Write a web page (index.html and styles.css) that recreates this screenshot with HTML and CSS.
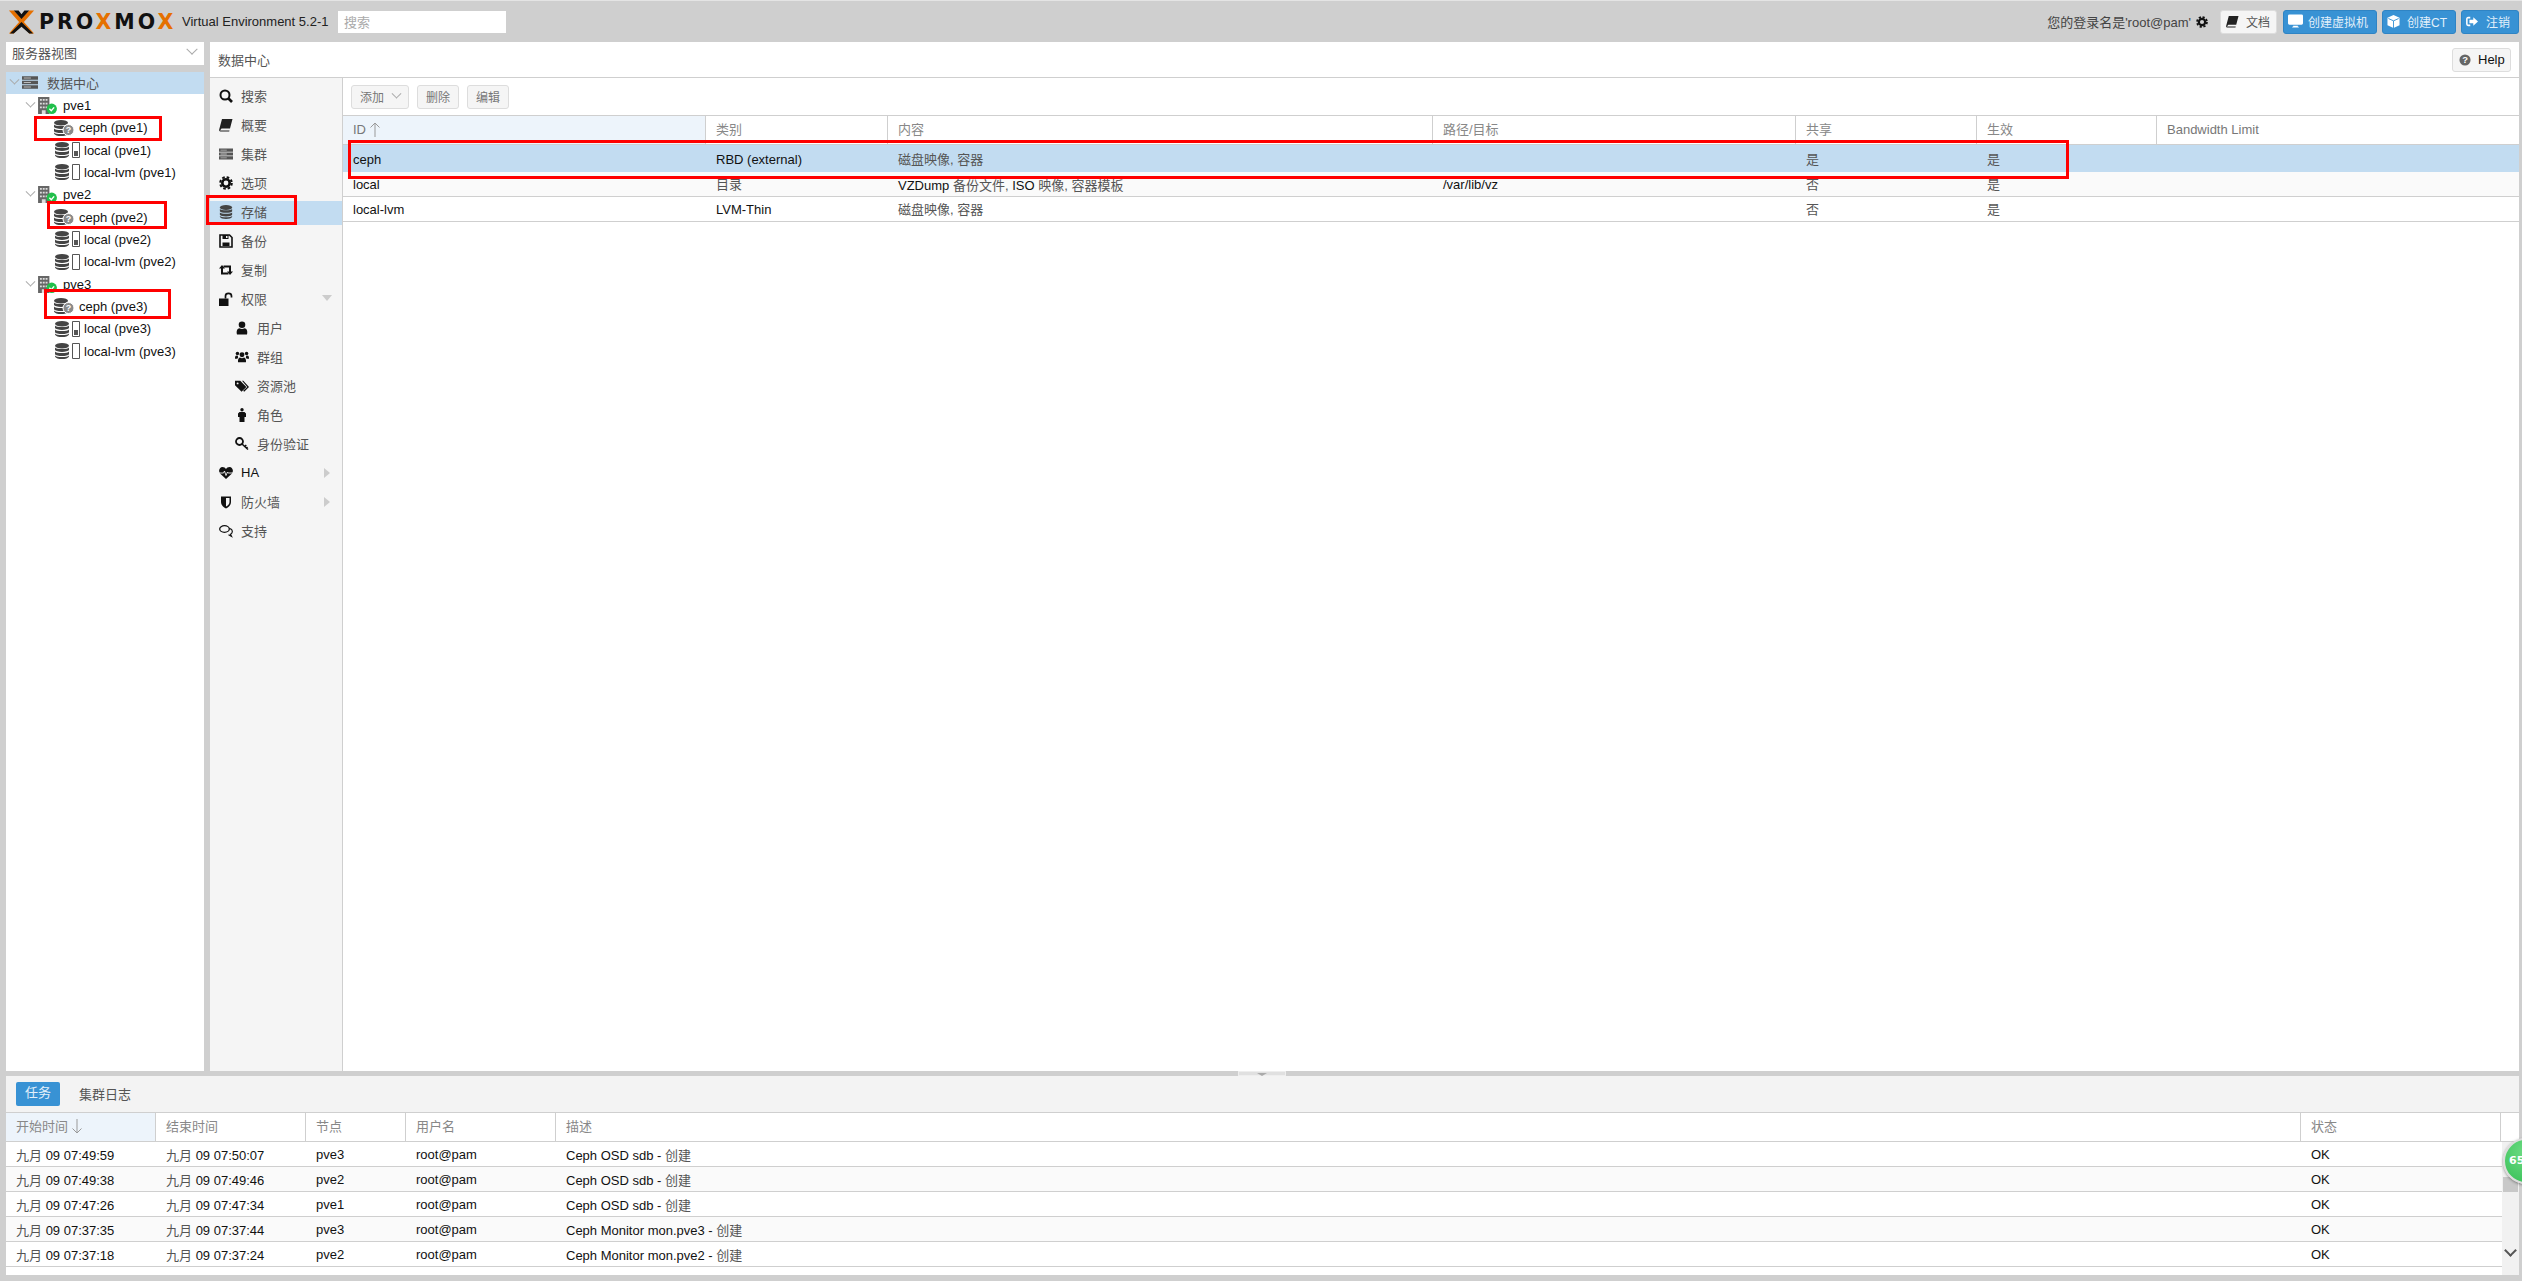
FILE: index.html
```html
<!DOCTYPE html>
<html lang="zh">
<head>
    <meta charset="UTF-8">
    <title>Proxmox Virtual Environment</title>
    <link rel="stylesheet" href="styles.css">
</head>
<body>
    <!-- icon sprite -->
    <svg class="sprite" xmlns="http://www.w3.org/2000/svg">
        <symbol id="i-servers" viewBox="0 0 18 14"><path d="M0 0h18v4H0zM0 5h18v4H0zM0 10h18v4H0z" fill="#555"/><path d="M2 1.500h8v1H2zM2 6.500h8v1H2zM2 11.500h8v1H2z" fill="#bbb"/></symbol>
        <symbol id="i-node" viewBox="0 0 20 18"><path d="M0 0h12v18H0z" fill="#666"/><path d="M2 2h2v2H2zM5 2h2v2H5zM8 2h2v2H8zM2 6h2v2H2zM5 6h2v2H5zM8 6h2v2H8zM2 10h2v2H2zM5 10h2v2H5zM8 10h2v2H8zM4 14h4v4H4z" fill="#ddd"/><circle cx="14.500" cy="12.500" r="5.500" fill="#21bf4b"/><path d="M12 12.500l2 2 3-3.500" fill="none" stroke="#fff" stroke-width="1.500"/></symbol>
        <symbol id="i-db" viewBox="0 0 14 16"><ellipse cx="7" cy="2.800" rx="7" ry="2.800" fill="#444"/><path d="M0 4.500c1 2 13 2 14 0v2.600c-1 2.400-13 2.400-14 0zM0 8.600c1 2 13 2 14 0v2.600c-1 2.400-13 2.400-14 0zM0 12.600c1 2 13 2 14 0v.8c-1 3.400-13 3.400-14 0z" fill="#444"/></symbol>
        <symbol id="i-ceph" viewBox="0 0 20 16"><use href="#i-db" width="14" height="16"/><circle cx="14.500" cy="10" r="5.500" fill="#8a8a8a" stroke="#fff"/><text x="14.500" y="13.200" class="qmark">?</text></symbol>
        <symbol id="i-disk" viewBox="0 0 8 16"><path d="M.5.5h7v15h-7z" fill="#fff" stroke="#555"/><path d="M2 9h4v5H2z" fill="#555"/></symbol>
        <symbol id="i-empty" viewBox="0 0 8 16"><path d="M.5.5h7v15h-7z" fill="#fff" stroke="#555"/></symbol>
        <symbol id="i-search" viewBox="0 0 14 14"><circle cx="6" cy="6" r="4.500" fill="none" stroke="#111" stroke-width="2"/><path d="M9 9l4 4" stroke="#111" stroke-width="2.600"/></symbol>
        <symbol id="i-book" viewBox="0 0 14 14"><path d="M3 1h10.500l-2.500 9.500H2.500L1 12.500h9.500l-.3 1H1.500C.4 13.500 0 12.500.2 11.500z" fill="#222"/></symbol>
        <symbol id="i-gear" viewBox="0 0 14 14"><circle cx="7" cy="7" r="3.700" fill="none" stroke="#111" stroke-width="2.600"/><circle cx="7" cy="7" r="5.800" fill="none" stroke="#111" stroke-width="2" stroke-dasharray="2.600 1.950"/></symbol>
        <symbol id="i-save" viewBox="0 0 14 14"><path d="M1 1h9.500L13 3.500V13H1z" fill="none" stroke="#111" stroke-width="1.600"/><path d="M3.500 1h6v4h-6zM3.500 8.500h7v3.500h-7z" fill="#111"/><path d="M7 2h1.500v2H7z" fill="#f5f5f5"/></symbol>
        <symbol id="i-retweet" viewBox="0 0 14 12"><path d="M3 3.500V9.500H9.500M11 8.500V2.500H4.500" fill="none" stroke="#111" stroke-width="2"/><path d="M0 4.500L3 1l3 3.500zM8 7.500L11 11l3-3.500z" fill="#111"/></symbol>
        <symbol id="i-unlock" viewBox="0 0 14 14"><path d="M0 6.500h9.500V14H0z" fill="#111"/><path d="M6.500 6.500V4c0-3.500 6-3.500 6 0v1.500" fill="none" stroke="#111" stroke-width="1.700"/></symbol>
        <symbol id="i-user" viewBox="0 0 12 14"><circle cx="6" cy="3.800" r="3.300" fill="#111"/><path d="M1 13.500c-1-4 .5-6 2.500-6.300 1.500 1 3.500 1 5 0 2 .3 3.500 2.300 2.500 6.300z" fill="#111"/></symbol>
        <symbol id="i-users" viewBox="0 0 16 14"><circle cx="8" cy="4.500" r="2.800" fill="#111"/><circle cx="2.800" cy="3" r="2" fill="#111"/><circle cx="13.200" cy="3" r="2" fill="#111"/><path d="M3.500 13c-.5-3.500 1-5 2.200-5.300 1.500.8 3 .8 4.600 0 1.200.3 2.700 1.800 2.200 5.300zM0 9c-.2-2.500.8-3.500 1.600-3.700.6.400 1.300.5 1.900.3-.3 1-.2 1.700.3 2.400C3 8.300 2.400 8.700 2 9zM16 9c.2-2.500-.8-3.500-1.600-3.700-.6.400-1.300.5-1.900.3.300 1 .2 1.700-.3 2.400.8.300 1.400.7 1.800 1z" fill="#111"/></symbol>
        <symbol id="i-tags" viewBox="0 0 16 14"><path d="M0 1h6l7 7-5.500 5.500L0 6z" fill="#111"/><path d="M8 1h1.500l6.500 7-5.500 5.500-1.200-1L14 8z" fill="#111"/><circle cx="3" cy="4" r="1.100" fill="#f5f5f5"/></symbol>
        <symbol id="i-male" viewBox="0 0 8 14"><circle cx="4" cy="1.700" r="1.700" fill="#111"/><path d="M1.500 4h5L8 5.500V9H6.500v5H1.500V9H0V5.500z" fill="#111"/></symbol>
        <symbol id="i-key" viewBox="0 0 14 14"><circle cx="4.500" cy="4.500" r="3.500" fill="none" stroke="#111" stroke-width="1.800"/><path d="M7 7l6 5.500M9.500 9.500l1.800-1.500M11.500 11l1-1" fill="none" stroke="#111" stroke-width="1.600"/></symbol>
        <symbol id="i-heart" viewBox="0 0 14 12"><path d="M7 12L1 6.500C-1 4 .5 0 3.500 0 5 0 6.300.8 7 2c.7-1.200 2-2 3.500-2 3 0 4.500 4 2.500 6.500z" fill="#111"/><path d="M0 6h4.500l1-2 1.500 4.500L8.500 5l.7 1H14" fill="none" stroke="#f5f5f5" stroke-width=".9"/></symbol>
        <symbol id="i-shield" viewBox="0 0 12 14"><path d="M1 1.500h10V7c0 3-2.500 5.500-5 6.500C3.500 12.500 1 10 1 7z" fill="#111"/><path d="M6 3v8.500C7.800 10.500 9.500 9 9.500 7V3z" fill="#f5f5f5"/></symbol>
        <symbol id="i-comments" viewBox="0 0 14 12"><path d="M8 3.500c3-.5 5.500 1 5.300 3.300-.1 1.200-.8 2-1.800 2.500l1 2-3-1.500" fill="none" stroke="#111" stroke-width="1.200"/><ellipse cx="5.500" cy="4" rx="4.800" ry="3.300" fill="#f5f5f5" stroke="#111" stroke-width="1.300"/></symbol>
        <symbol id="i-desktop" viewBox="0 0 16 14"><path d="M1.500 0h13A1.500 1.500 0 0 1 16 1.500v8a1.500 1.500 0 0 1-1.500 1.500h-13A1.500 1.500 0 0 1 0 9.500v-8A1.500 1.500 0 0 1 1.500 0zM5.500 12h5v1h1v1h-7v-1h1z" fill="#fff"/></symbol>
        <symbol id="i-cube" viewBox="0 0 14 14"><path d="M7 0l6.500 3v8L7 14 .5 11V3z" fill="#fff"/><path d="M1.500 3.800L7 6.300l5.500-2.500M7 6.300V14" fill="none" stroke="#3892d4" stroke-width="1"/></symbol>
        <symbol id="i-signout" viewBox="0 0 14 12"><path d="M5 1.500H2.500C1.500 1.500 1 2 1 3v6c0 1 .5 1.500 1.500 1.500H5" fill="none" stroke="#fff" stroke-width="1.800"/><path d="M4 4h4.500V1l5.500 5-5.500 5V8H4z" fill="#fff"/></symbol>
        <symbol id="i-help" viewBox="0 0 14 14"><circle cx="7" cy="7" r="6.500" fill="#666"/><text x="7" y="11" class="qmark-big">?</text></symbol>
        <symbol id="i-up" viewBox="0 0 10 15"><path d="M5 15V1M.5 5.500L5 1l4.500 4.500" fill="none" stroke="#999"/></symbol>
        <symbol id="i-down" viewBox="0 0 10 15"><path d="M5 0v14M.5 9.500L5 14l4.500-4.500" fill="none" stroke="#999"/></symbol>
    </svg>

    <header class="topbar">
        <svg class="logo-mark" viewBox="0 0 30 26"><path d="M7 1l8 8 8-8h5L17.500 13 28 25h-5l-8-9-8 9H2l10.500-12L2 1z" fill="#e57000"/><path d="M7 1h5l3 4 3-4h5l-8 9zM7 25H3l12-12 12 12h-4l-8-7z" fill="#111"/></svg>
        <div class="logo-text">PRO<span>X</span>MO<span>X</span></div>
        <div class="version">Virtual Environment 5.2-1</div>
        <div class="search-box">搜索</div>
        <div class="top-right">
            <span class="login">您的登录名是'root@pam'</span>
            <svg class="login-gear"><use href="#i-gear"/></svg>
            <div class="top-btn light"><svg><use href="#i-book"/></svg>文档</div>
            <div class="top-btn blue vm"><svg><use href="#i-desktop"/></svg>创建虚拟机</div>
            <div class="top-btn blue ct"><svg><use href="#i-cube"/></svg>创建CT</div>
            <div class="top-btn blue out"><svg><use href="#i-signout"/></svg>注销</div>
        </div>
    </header>

    <div class="main">
        <div class="left">
            <div class="view-select">服务器视图<span class="chev big"></span></div>
            <div class="tree">
                <div class="tree-row dc selected"><span class="chev"></span><svg class="ic-servers"><use href="#i-servers"/></svg><span class="zh">数据中心</span></div>

                <div class="tree-row node"><span class="chev"></span><svg class="ic-node"><use href="#i-node"/></svg>pve1</div>
                <div class="tree-row ceph"><svg class="ic-ceph"><use href="#i-ceph"/></svg>ceph (pve1)</div>
                <div class="tree-row store"><svg class="ic-db"><use href="#i-db"/></svg><svg class="ic-bar"><use href="#i-disk"/></svg>local (pve1)</div>
                <div class="tree-row store"><svg class="ic-db"><use href="#i-db"/></svg><svg class="ic-bar"><use href="#i-empty"/></svg>local-lvm (pve1)</div>

                <div class="tree-row node"><span class="chev"></span><svg class="ic-node"><use href="#i-node"/></svg>pve2</div>
                <div class="tree-row ceph"><svg class="ic-ceph"><use href="#i-ceph"/></svg>ceph (pve2)</div>
                <div class="tree-row store"><svg class="ic-db"><use href="#i-db"/></svg><svg class="ic-bar"><use href="#i-disk"/></svg>local (pve2)</div>
                <div class="tree-row store"><svg class="ic-db"><use href="#i-db"/></svg><svg class="ic-bar"><use href="#i-empty"/></svg>local-lvm (pve2)</div>

                <div class="tree-row node"><span class="chev"></span><svg class="ic-node"><use href="#i-node"/></svg>pve3</div>
                <div class="tree-row ceph"><svg class="ic-ceph"><use href="#i-ceph"/></svg>ceph (pve3)</div>
                <div class="tree-row store"><svg class="ic-db"><use href="#i-db"/></svg><svg class="ic-bar"><use href="#i-disk"/></svg>local (pve3)</div>
                <div class="tree-row store"><svg class="ic-db"><use href="#i-db"/></svg><svg class="ic-bar"><use href="#i-empty"/></svg>local-lvm (pve3)</div>
            </div>
        </div>

        <div class="center">
            <div class="title-bar">
                <span class="zh">数据中心</span>
                <div class="help-btn"><svg><use href="#i-help"/></svg>Help</div>
            </div>
            <div class="body-row">
                <nav class="nav">
                    <div class="nav-item"><svg><use href="#i-search"/></svg>搜索</div>
                    <div class="nav-item"><svg><use href="#i-book"/></svg>概要</div>
                    <div class="nav-item"><svg><use href="#i-servers"/></svg>集群</div>
                    <div class="nav-item"><svg><use href="#i-gear"/></svg>选项</div>
                    <div class="nav-item active"><svg><use href="#i-db"/></svg>存储</div>
                    <div class="nav-item"><svg><use href="#i-save"/></svg>备份</div>
                    <div class="nav-item"><svg><use href="#i-retweet"/></svg>复制</div>
                    <div class="nav-item"><svg><use href="#i-unlock"/></svg>权限<span class="tri down"></span></div>
                    <div class="nav-item sub"><svg><use href="#i-user"/></svg>用户</div>
                    <div class="nav-item sub"><svg><use href="#i-users"/></svg>群组</div>
                    <div class="nav-item sub"><svg><use href="#i-tags"/></svg>资源池</div>
                    <div class="nav-item sub"><svg><use href="#i-male"/></svg>角色</div>
                    <div class="nav-item sub"><svg><use href="#i-key"/></svg>身份验证</div>
                    <div class="nav-item black"><svg><use href="#i-heart"/></svg>HA<span class="tri right"></span></div>
                    <div class="nav-item"><svg><use href="#i-shield"/></svg>防火墙<span class="tri right"></span></div>
                    <div class="nav-item"><svg><use href="#i-comments"/></svg>支持</div>
                </nav>
                <div class="content">
                    <div class="toolbar">
                        <div class="tool-btn add">添加<span class="chev"></span></div>
                        <div class="tool-btn">删除</div>
                        <div class="tool-btn">编辑</div>
                    </div>
                    <table class="grid storage-grid">
                        <colgroup><col class="c1"><col class="c2"><col class="c3"><col class="c4"><col class="c5"><col class="c6"><col></colgroup>
                        <thead>
                            <tr><th class="sorted en">ID <svg class="sort-arrow"><use href="#i-up"/></svg></th><th>类别</th><th>内容</th><th>路径/目标</th><th>共享</th><th>生效</th><th class="en">Bandwidth Limit</th></tr>
                        </thead>
                        <tbody>
                            <tr class="row-selected"><td>ceph</td><td>RBD (external)</td><td class="zh">磁盘映像, 容器</td><td></td><td class="zh">是</td><td class="zh">是</td><td></td></tr>
                            <tr class="alt"><td>local</td><td class="zh">目录</td><td>VZDump <span class="zh">备份文件,</span> ISO <span class="zh">映像, 容器模板</span></td><td>/var/lib/vz</td><td class="zh">否</td><td class="zh">是</td><td></td></tr>
                            <tr><td>local-lvm</td><td>LVM-Thin</td><td class="zh">磁盘映像, 容器</td><td></td><td class="zh">否</td><td class="zh">是</td><td></td></tr>
                        </tbody>
                    </table>
                </div>
            </div>
        </div>
    </div>

    <div class="splitter"><div class="split-handle"><span></span></div></div>

    <div class="bottom">
        <div class="tabs">
            <div class="tab active">任务</div>
            <div class="tab">集群日志</div>
        </div>
        <table class="grid task-grid">
            <colgroup><col class="t1"><col class="t2"><col class="t3"><col class="t4"><col><col class="t6"><col class="t7"></colgroup>
            <thead>
                <tr><th class="sorted">开始时间 <svg class="sort-arrow"><use href="#i-down"/></svg></th><th>结束时间</th><th>节点</th><th>用户名</th><th>描述</th><th>状态</th><th></th></tr>
            </thead>
            <tbody>
                <tr><td><span class="zh">九月</span> 09 07:49:59</td><td><span class="zh">九月</span> 09 07:50:07</td><td>pve3</td><td>root@pam</td><td>Ceph OSD sdb - <span class="zh">创建</span></td><td>OK</td><td></td></tr>
                <tr class="alt"><td><span class="zh">九月</span> 09 07:49:38</td><td><span class="zh">九月</span> 09 07:49:46</td><td>pve2</td><td>root@pam</td><td>Ceph OSD sdb - <span class="zh">创建</span></td><td>OK</td><td></td></tr>
                <tr><td><span class="zh">九月</span> 09 07:47:26</td><td><span class="zh">九月</span> 09 07:47:34</td><td>pve1</td><td>root@pam</td><td>Ceph OSD sdb - <span class="zh">创建</span></td><td>OK</td><td></td></tr>
                <tr class="alt"><td><span class="zh">九月</span> 09 07:37:35</td><td><span class="zh">九月</span> 09 07:37:44</td><td>pve3</td><td>root@pam</td><td>Ceph Monitor mon.pve3 - <span class="zh">创建</span></td><td>OK</td><td></td></tr>
                <tr><td><span class="zh">九月</span> 09 07:37:18</td><td><span class="zh">九月</span> 09 07:37:24</td><td>pve2</td><td>root@pam</td><td>Ceph Monitor mon.pve2 - <span class="zh">创建</span></td><td>OK</td><td></td></tr>
            </tbody>
        </table>
        <div class="scrollbar"><div class="thumb"></div><span class="scroll-down"></span></div>
    </div>

    <!-- red annotation boxes drawn over the screenshot -->
    <div class="mark m-tree1"></div>
    <div class="mark m-tree2"></div>
    <div class="mark m-tree3"></div>
    <div class="mark m-nav"></div>
    <div class="mark m-grid"></div>

    <div class="ball">65</div>
</body>
</html>
```

FILE: styles.css
```css
* {
    box-sizing: border-box;
}
html, body {
    height: 100%;
}
body {
    margin: 0;
    position: relative;
    overflow: hidden;
    background-color: #cfcfcf;
    color: #111;
    font-family: "Liberation Sans", "Noto Sans CJK SC", sans-serif;
    font-size: 13px;
}
.sprite {
    display: none;
}
.zh {
    color: #555;
}
.qmark {
    fill: #fff;
    font: bold 9px "Liberation Sans", sans-serif;
    text-anchor: middle;
}
.qmark-big {
    fill: #fff;
    font: bold 11px "Liberation Sans", sans-serif;
    text-anchor: middle;
}

/* top bar */
.topbar {
    display: flex;
    align-items: center;
    height: 42px;
    padding-left: 7px;
    border-top: 1px solid #e4e4e4;
}
.logo-mark {
    width: 29px;
    height: 26px;
    flex: none;
}
.logo-text {
    width: 143px;
    margin-left: 3px;
    font-family: "DejaVu Sans", sans-serif;
    font-weight: bold;
    font-size: 20.5px;
    letter-spacing: 3px;
    color: #111;
    white-space: nowrap;
}
.logo-text span {
    color: #e57000;
}
.version {
    width: 156px;
    color: #222;
    white-space: nowrap;
}
.search-box {
    width: 168px;
    height: 22px;
    padding: 1px 6px;
    background-color: #fff;
    color: #aaa;
}
.top-right {
    display: flex;
    align-items: center;
    margin-left: auto;
    margin-right: 3px;
}
.login {
    color: #444;
}
.login-gear {
    width: 12px;
    height: 12px;
    margin: 0 12px 0 5px;
}
.top-btn {
    display: flex;
    align-items: center;
    height: 24px;
    margin-left: 5px;
    padding-bottom: 1px;
    border-radius: 3px;
    font-size: 12px;
    white-space: nowrap;
}
.top-btn svg {
    width: 13px;
    height: 13px;
    margin: 0 7px 0 4px;
}
.top-btn.light {
    width: 57px;
    margin-left: 0;
    background-color: #f5f5f5;
    border: 1px solid #ddd;
    color: #555;
}
.top-btn.light svg {
    margin-left: 5px;
}
.top-btn.blue {
    background-color: #3892d4;
    border: 1px solid #2f84c4;
    color: #e3f0fa;
}
.top-btn.vm {
    width: 94px;
    margin-left: 6px;
}
.top-btn.vm svg {
    width: 15px;
    height: 14px;
    margin-right: 5px;
}
.top-btn.ct {
    width: 74px;
}
.top-btn.out {
    width: 58px;
}
.top-btn.out svg {
    width: 12px;
    margin-right: 8px;
}

/* main area */
.main {
    display: flex;
    gap: 6px;
    height: 1029px;
    padding: 0 3px 0 6px;
}
.left {
    display: flex;
    flex-direction: column;
    width: 198px;
    flex: none;
}
.view-select {
    display: flex;
    align-items: center;
    justify-content: space-between;
    height: 23px;
    padding: 0 8px 3px 6px;
    background-color: #fff;
    color: #555;
}
.tree {
    flex: 1;
    margin-top: 7px;
    background-color: #fff;
}
.tree-row {
    display: flex;
    align-items: center;
    height: 22.33px;
    white-space: nowrap;
}
.tree-row svg {
    flex: none;
}
.tree-row.selected {
    background-color: #c2dcf1;
    padding-bottom: 2px;
}
.chev {
    display: inline-block;
    flex: none;
    width: 7px;
    height: 7px;
    border-right: 1px solid #aaa;
    border-bottom: 1px solid #aaa;
    transform: rotate(45deg) translate(-2px, -2px);
}
.chev.big {
    width: 8px;
    height: 8px;
}
.dc {
    padding-left: 5px;
}
.ic-servers {
    width: 16px;
    height: 13px;
    margin-left: 4px;
    margin-right: 9px;
}
.node {
    padding-left: 21px;
}
.ic-node {
    width: 19px;
    height: 17px;
    margin-left: 4px;
    margin-right: 6px;
}
.ceph {
    padding-left: 48px;
}
.ic-ceph {
    width: 20px;
    height: 16px;
    margin-right: 5px;
}
.store {
    padding-left: 49px;
}
.ic-db {
    width: 14px;
    height: 16px;
}
.ic-bar {
    width: 8px;
    height: 16px;
    margin: 0 4px 0 3px;
}

.center {
    display: flex;
    flex-direction: column;
    flex: 1;
    background-color: #fff;
}
.title-bar {
    display: flex;
    align-items: center;
    justify-content: space-between;
    height: 36px;
    padding: 0 8px;
    border-bottom: 1px solid #cfcfcf;
}
.help-btn {
    display: flex;
    align-items: center;
    width: 59px;
    height: 24px;
    padding-left: 6px;
    background-color: #f5f5f5;
    border: 1px solid #ddd;
    border-radius: 3px;
}
.help-btn svg {
    width: 12px;
    height: 12px;
    margin-right: 7px;
}
.body-row {
    display: flex;
    flex: 1;
}

/* side menu */
.nav {
    width: 133px;
    flex: none;
    padding-top: 6.5px;
    background-color: #f5f5f5;
    border-right: 1px solid #cfcfcf;
}
.nav-item {
    position: relative;
    display: flex;
    align-items: center;
    height: 24px;
    margin-bottom: 5px;
    padding-left: 9px;
    padding-bottom: 2px;
    color: #555;
}
.nav-item svg {
    width: 14px;
    height: 14px;
    margin-right: 8px;
}
.nav-item.sub {
    padding-left: 25px;
}
.nav-item.active {
    background-color: #c2dcf1;
}
.nav-item.black {
    color: #111;
}
.tri {
    position: absolute;
    right: 14px;
    top: 7px;
    width: 0;
    height: 0;
}
.tri.down {
    right: 10px;
    border-left: 5px solid transparent;
    border-right: 5px solid transparent;
    border-top: 6px solid #ccc;
}
.tri.right {
    right: 12px;
    top: 6px;
    border-top: 5px solid transparent;
    border-bottom: 5px solid transparent;
    border-left: 6px solid #ccc;
}

/* storage panel */
.content {
    flex: 1;
}
.toolbar {
    display: flex;
    align-items: center;
    gap: 8px;
    height: 37px;
    padding-left: 8px;
}
.tool-btn {
    display: flex;
    align-items: center;
    justify-content: center;
    width: 42px;
    height: 24px;
    padding-bottom: 1px;
    background-color: #f5f5f5;
    border: 1px solid #ddd;
    border-radius: 3px;
    color: #777;
    font-size: 12px;
}
.tool-btn.add {
    width: 58px;
    gap: 9px;
}

.grid {
    width: 100%;
    table-layout: fixed;
    border-collapse: separate;
    border-spacing: 0;
}
.grid th {
    height: 30px;
    padding: 0 10px 3px;
    border-top: 1px solid #cfcfcf;
    border-bottom: 1px solid #cfcfcf;
    border-right: 1px solid #cfcfcf;
    background-color: #fff;
    color: #888;
    font-weight: normal;
    text-align: left;
    white-space: nowrap;
}
.grid th.en {
    padding-bottom: 1px;
    color: #777;
}
.grid th:last-child {
    border-right: none;
}
.grid th.sorted {
    background-color: #edf4fb;
}
.sort-arrow {
    width: 10px;
    height: 15px;
    vertical-align: -3px;
}
.grid td {
    height: 25px;
    padding: 0 10px;
    border-bottom: 1px solid #cfcfcf;
    color: #111;
    white-space: nowrap;
}
.grid td.zh {
    padding-bottom: 2px;
    color: #555;
}
.grid td .zh {
    color: #555;
}
.alt td {
    background-color: #fafafa;
}
.storage-grid .row-selected td {
    height: 27px;
    background-color: #c2dcf1;
    border-bottom: none;
    padding-top: 1px;
}
.c1 { width: 363px; }
.c2 { width: 182px; }
.c3 { width: 545px; }
.c4 { width: 363px; }
.c5 { width: 181px; }
.c6 { width: 180px; }

/* splitter + bottom panel */
.splitter {
    position: relative;
    height: 5px;
}
.split-handle {
    position: absolute;
    left: 1238px;
    top: 0;
    width: 48px;
    height: 5px;
    background-color: #e0e0e0;
    border: 1px solid #eee;
}
.split-handle span {
    position: absolute;
    left: 18px;
    top: 1px;
    border-left: 5px solid transparent;
    border-right: 5px solid transparent;
    border-top: 3px solid #aaa;
}
.bottom {
    position: relative;
    height: 199px;
    margin: 0 3px 0 6px;
    background-color: #fff;
}
.tabs {
    display: flex;
    align-items: center;
    gap: 19px;
    height: 36px;
    padding-left: 10px;
    background-color: #f3f3f3;
}
.tab {
    padding-bottom: 2px;
    color: #555;
}
.tab.active {
    width: 44px;
    height: 24px;
    padding-bottom: 0;
    line-height: 21px;
    text-align: center;
    background-color: #3892d4;
    border-radius: 2px;
    color: #e3f0fa;
}
.t1 { width: 150px; }
.t2 { width: 150px; }
.t3 { width: 100px; }
.t4 { width: 150px; }
.t6 { width: 200px; }
.t7 { width: 18px; }
.scrollbar {
    position: absolute;
    right: 0;
    top: 66px;
    bottom: 0;
    width: 17px;
    background-color: #f1f1f1;
}
.thumb {
    width: 15px;
    height: 15px;
    margin: 35px 0 0 1px;
    background-color: #c8c8c8;
}
.scroll-down {
    position: absolute;
    left: 4px;
    bottom: 20px;
    width: 9px;
    height: 9px;
    border-right: 2px solid #555;
    border-bottom: 2px solid #555;
    transform: rotate(45deg);
}

/* annotations */
.mark {
    position: absolute;
    border: 3px solid #f00;
}
.m-tree1 { left: 34px; top: 116px; width: 128px; height: 25px; }
.m-tree2 { left: 47px; top: 201px; width: 120px; height: 28px; }
.m-tree3 { left: 44px; top: 289px; width: 127px; height: 30px; }
.m-nav { left: 206px; top: 195px; width: 91px; height: 30px; }
.m-grid { left: 348px; top: 140px; width: 1721px; height: 39px; }

.ball {
    position: absolute;
    left: 2503px;
    top: 1138px;
    width: 46px;
    height: 46px;
    padding: 14px 0 0 4px;
    border: 2px solid #ddd;
    border-radius: 50%;
    background: radial-gradient(circle at 50% 30%, #6fdc85, #35bf55);
    box-shadow: 0 1px 3px rgba(0, 0, 0, 0.4);
    color: #fff;
    font: bold 11px "DejaVu Sans", sans-serif;
}
```
